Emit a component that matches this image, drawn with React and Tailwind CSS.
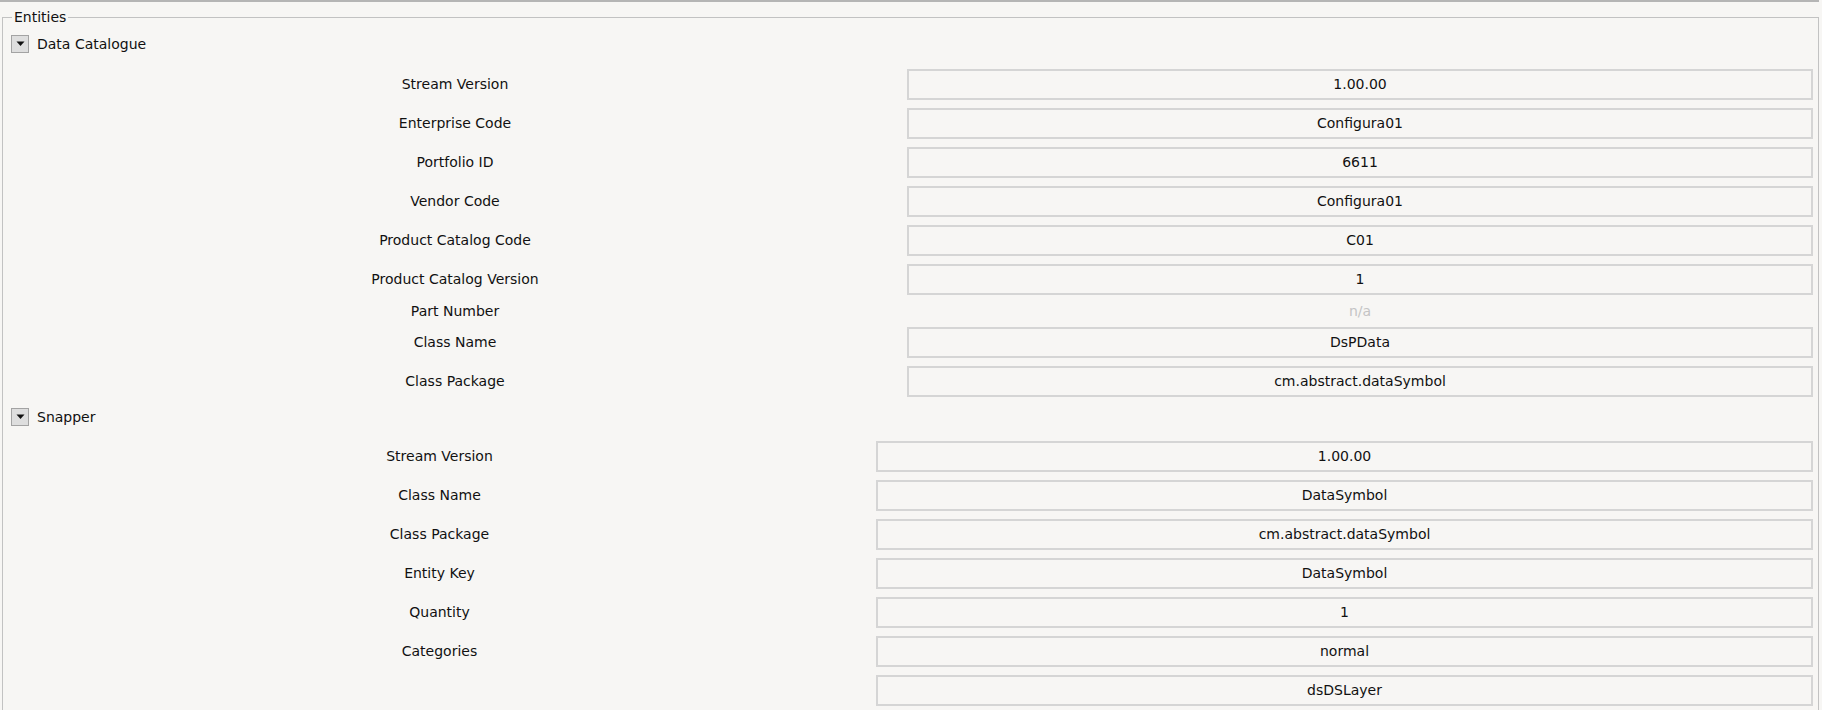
import React from "react";

const dataCatalogue = [
  ["Stream Version", "1.00.00"],
  ["Enterprise Code", "Configura01"],
  ["Portfolio ID", "6611"],
  ["Vendor Code", "Configura01"],
  ["Product Catalog Code", "C01"],
  ["Product Catalog Version", "1"],
  ["Part Number", null],
  ["Class Name", "DsPData"],
  ["Class Package", "cm.abstract.dataSymbol"],
];

const snapper = [
  ["Stream Version", "1.00.00"],
  ["Class Name", "DataSymbol"],
  ["Class Package", "cm.abstract.dataSymbol"],
  ["Entity Key", "DataSymbol"],
  ["Quantity", "1"],
  ["Categories", "normal"],
  ["", "dsDSLayer"],
];

function Toggle() {
  return (
    <div className="w-[18px] h-[18px] border border-[#a3a3a3] bg-[#dedede] flex items-center justify-center">
      <svg width="9" height="6" viewBox="0 0 9 6">
        <path d="M0.5 0.5 L8.5 0.5 L4.5 5 Z" fill="#111111" />
      </svg>
    </div>
  );
}

function Header({ title }) {
  return (
    <div className="flex items-center gap-[8px] pl-[8px] h-[18px]">
      <Toggle />
      <span className="text-[#111111]">{title}</span>
    </div>
  );
}

function Rows({ rows, grid }) {
  return (
    <div className={`grid ${grid} gap-y-[8px] pr-[5px]`}>
      {rows.map(([label, value], i) =>
        value === null ? (
          <React.Fragment key={i}>
            <div className="h-[16px] flex items-center justify-center text-[#111111]">{label}</div>
            <div className="h-[16px] flex items-center justify-center text-[#c4c4c4]">n/a</div>
          </React.Fragment>
        ) : (
          <React.Fragment key={i}>
            <div className="h-[31px] flex items-center justify-center text-[#111111]">{label}</div>
            <div className="h-[31px] flex items-center justify-center border-2 border-[#d5d5d5] bg-[#f7f6f4] text-[#111111]">
              {value}
            </div>
          </React.Fragment>
        )
      )}
    </div>
  );
}

export default function App() {
  return (
    <div
      className="w-[1822px] h-[710px] overflow-hidden bg-[#f7f6f4] pl-[2px] pr-[3px] text-[14px]"
      style={{ fontFamily: '"DejaVu Sans", Verdana, sans-serif' }}
    >
      <div className="h-[2px] bg-[#b5b5b5] -ml-[2px] w-[1819px]" />
      <fieldset className="mt-[7px] border border-[#c2c2c2] h-[720px]">
        <legend className="ml-[9px] px-[2px] leading-[17px] text-[#111111]">Entities</legend>
        <div className="mt-[9px]">
          <Header title="Data Catalogue" />
        </div>
        <div className="mt-[16px]">
          <Rows rows={dataCatalogue} grid="grid-cols-[1fr_906px]" />
        </div>
        <div className="mt-[11px]">
          <Header title="Snapper" />
        </div>
        <div className="mt-[15px]">
          <Rows rows={snapper} grid="grid-cols-[1fr_937px]" />
        </div>
      </fieldset>
    </div>
  );
}
